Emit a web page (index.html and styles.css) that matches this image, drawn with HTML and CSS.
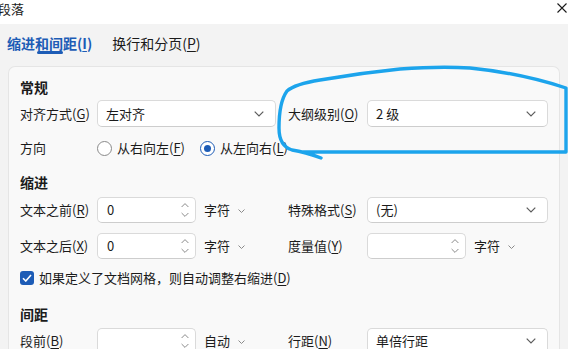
FILE: index.html
```html
<!DOCTYPE html>
<html lang="zh-CN">
<head>
<meta charset="utf-8">
<title>段落</title>
<link rel="stylesheet" href="styles.css">
</head>
<body>
<div class="window">
  <header class="titlebar">
    <span class="title">段落</span>
    <svg class="close" width="10" height="10" viewBox="0 0 10 10"><path d="M0.5 0.5 L9.5 9.5 M9.5 0.5 L0.5 9.5" stroke="#1a1a1a" stroke-width="1.1" fill="none"/></svg>
  </header>
  <nav class="tabs">
    <div class="tab active"><span class="tab-text">缩进和间距(<u>I</u>)</span><i class="tab-bar"></i></div>
    <div class="tab"><span class="tab-text">换行和分页(<u>P</u>)</span></div>
  </nav>
  <section class="card">
    <h3 class="heading">常规</h3>
    <div class="row first">
      <span class="label">对齐方式(<u>G</u>)</span>
      <div class="select left"><span>左对齐</span><svg class="chev" width="10" height="6" viewBox="0 0 10 6"><path d="M0.7 0.7 L5 5 L9.3 0.7" stroke="#5c5c5c" stroke-width="1.2" fill="none"/></svg></div>
      <span class="label">大纲级别(<u>O</u>)</span>
      <div class="select"><span>2 级</span><svg class="chev" width="10" height="6" viewBox="0 0 10 6"><path d="M0.7 0.7 L5 5 L9.3 0.7" stroke="#5c5c5c" stroke-width="1.2" fill="none"/></svg></div>
    </div>
    <div class="radio-row">
      <span class="label">方向</span>
      <span class="radio"></span><span class="radio-text">从右向左(<u>F</u>)</span>
      <span class="radio checked"></span><span class="radio-text">从左向右(<u>L</u>)</span>
    </div>

    <h3 class="heading h-indent">缩进</h3>
    <div class="row r-before">
      <span class="label">文本之前(<u>R</u>)</span>
      <div class="unit-wrap">
        <div class="spin"><span>0</span><svg class="arrows" width="8" height="14" viewBox="0 0 8 14"><path d="M0.6 4 L4 0.6 L7.4 4 M0.6 10 L4 13.4 L7.4 10" stroke="#8a8a8a" stroke-width="1" fill="none"/></svg></div>
        <span class="unit">字符</span><svg class="mini" width="7" height="4" viewBox="0 0 7 4"><path d="M0.5 0.5 L3.5 3.5 L6.5 0.5" stroke="#8a8a8a" stroke-width="1" fill="none"/></svg>
      </div>
      <span class="label">特殊格式(<u>S</u>)</span>
      <div class="select"><span>(无)</span><svg class="chev" width="10" height="6" viewBox="0 0 10 6"><path d="M0.7 0.7 L5 5 L9.3 0.7" stroke="#5c5c5c" stroke-width="1.2" fill="none"/></svg></div>
    </div>
    <div class="row r-after">
      <span class="label">文本之后(<u>X</u>)</span>
      <div class="unit-wrap">
        <div class="spin"><span>0</span><svg class="arrows" width="8" height="14" viewBox="0 0 8 14"><path d="M0.6 4 L4 0.6 L7.4 4 M0.6 10 L4 13.4 L7.4 10" stroke="#8a8a8a" stroke-width="1" fill="none"/></svg></div>
        <span class="unit">字符</span><svg class="mini" width="7" height="4" viewBox="0 0 7 4"><path d="M0.5 0.5 L3.5 3.5 L6.5 0.5" stroke="#8a8a8a" stroke-width="1" fill="none"/></svg>
      </div>
      <span class="label">度量值(<u>Y</u>)</span>
      <div class="unit-wrap">
        <div class="spin"><span></span><svg class="arrows" width="8" height="14" viewBox="0 0 8 14"><path d="M0.6 4 L4 0.6 L7.4 4 M0.6 10 L4 13.4 L7.4 10" stroke="#8a8a8a" stroke-width="1" fill="none"/></svg></div>
        <span class="unit">字符</span><svg class="mini" width="7" height="4" viewBox="0 0 7 4"><path d="M0.5 0.5 L3.5 3.5 L6.5 0.5" stroke="#8a8a8a" stroke-width="1" fill="none"/></svg>
      </div>
    </div>
    <div class="check-row">
      <span class="checkbox"><svg width="10" height="8" viewBox="0 0 10 8"><path d="M1 4.2 L3.8 7 L9 1" stroke="#fff" stroke-width="1.6" fill="none"/></svg></span>
      <span class="check-text">如果定义了文档网格，则自动调整右缩进(<u>D</u>)</span>
    </div>

    <h3 class="heading h-space">间距</h3>
    <div class="row r-space">
      <span class="label">段前(<u>B</u>)</span>
      <div class="unit-wrap">
        <div class="spin"><span></span><svg class="arrows" width="8" height="14" viewBox="0 0 8 14"><path d="M0.6 4 L4 0.6 L7.4 4 M0.6 10 L4 13.4 L7.4 10" stroke="#8a8a8a" stroke-width="1" fill="none"/></svg></div>
        <span class="unit">自动</span><svg class="mini" width="7" height="4" viewBox="0 0 7 4"><path d="M0.5 0.5 L3.5 3.5 L6.5 0.5" stroke="#8a8a8a" stroke-width="1" fill="none"/></svg>
      </div>
      <span class="label">行距(<u>N</u>)</span>
      <div class="select"><span>单倍行距</span><svg class="chev" width="10" height="6" viewBox="0 0 10 6"><path d="M0.7 0.7 L5 5 L9.3 0.7" stroke="#5c5c5c" stroke-width="1.2" fill="none"/></svg></div>
    </div>
  </section>

  <svg class="annotation" width="568" height="349" viewBox="0 0 568 349">
    <path d="M321 158 Q 305 152 292 150 Q 279 146 279 128 Q 279 102 287 91 Q 295 84 320 80 Q 360 73 400 69 Q 440 66 470 68 Q 520 73 566 88 L 566 152 L 302 152" stroke="#1ca4ec" stroke-width="3.4" fill="none" stroke-linecap="round" stroke-linejoin="round"/>
  </svg>
</div>
</body>
</html>
```

FILE: styles.css
```css
* { box-sizing: border-box; }

html, body {
  margin: 0;
  padding: 0;
}

body {
  width: 568px;
  height: 349px;
  overflow: hidden;
  background: #f3f3f3;
  font-family: "Noto Sans CJK SC", "Noto Sans", sans-serif;
  color: #1b1b1b;
  font-size: 13px;
}

.window {
  position: relative;
  width: 568px;
  height: 349px;
  overflow: hidden;
}

u { text-decoration: underline; text-underline-offset: 2px; text-decoration-thickness: 1px; }

.titlebar {
  height: 24px;
  background: #ffffff;
  display: flex;
  justify-content: space-between;
  align-items: flex-start;
}

.title {
  margin-left: -2px;
  padding-top: 1px;
  font-size: 13px;
  line-height: 16px;
}

.close {
  margin-top: 3px;
  margin-right: 1px;
}

.tabs {
  height: 42px;
  display: flex;
  gap: 20px;
  padding: 10px 0 0 7px;
  align-items: flex-start;
}

.tab {
  display: flex;
  flex-direction: column;
  align-items: center;
}

.tab-text {
  font-size: 14px;
  line-height: 18px;
  color: #1b1b1b;
}

.tab.active .tab-text {
  color: #1d5cb6;
  font-weight: 700;
}

.tab-bar {
  display: block;
  width: 26px;
  height: 3px;
  margin-top: -1px;
  border-radius: 2px;
  background: #1d5cb6;
}

.card {
  margin: 0 8px;
  height: 283px;
  overflow: hidden;
  background: #f9f9f9;
  border: 1px solid #e5e5e5;
  border-bottom: none;
  border-radius: 7px 7px 0 0;
  padding: 10px 11px 0 11px;
}

.heading {
  margin: 0;
  font-size: 14px;
  font-weight: 700;
  line-height: 20px;
}

.h-indent { margin-top: 14px; }
.h-space { margin-top: 16px; }

.row {
  display: grid;
  grid-template-columns: 77px 191px 79px 181px;
  align-items: center;
  height: 26px;
}

.row.first { margin-top: 3px; height: 27px; }
.r-before { margin-top: 5px; }
.r-after { margin-top: 10px; }
.r-space { margin-top: 4px; }

.label {
  line-height: 18px;
  white-space: nowrap;
}

.select {
  height: 100%;
  width: 181px;
  background: #ffffff;
  border: 1px solid #dadada;
  border-bottom-color: #cdcdcd;
  border-radius: 5px;
  display: flex;
  align-items: center;
  justify-content: space-between;
  padding: 0 11px 0 8px;
  line-height: 18px;
}

.select.left { width: 179px; }

.unit-wrap {
  display: flex;
  align-items: center;
  height: 100%;
}

.spin {
  width: 99px;
  height: 100%;
  background: #ffffff;
  border: 1px solid #dadada;
  border-bottom-color: #cdcdcd;
  border-radius: 5px;
  display: flex;
  align-items: center;
  justify-content: space-between;
  padding: 0 6px 0 9px;
  line-height: 18px;
}

.unit {
  margin-left: 8px;
  line-height: 18px;
}

.mini {
  margin-left: 8px;
  margin-top: 2px;
}

.radio-row {
  display: flex;
  align-items: center;
  height: 20px;
  margin-top: 11px;
}

.radio-row .label { width: 77px; }

.radio {
  width: 15px;
  height: 15px;
  border-radius: 50%;
  border: 1px solid #8a8a8a;
  background: #ffffff;
  display: flex;
  align-items: center;
  justify-content: center;
}

.radio.checked {
  border-color: #1d5cb6;
  margin-left: 15px;
}

.radio.checked::after {
  content: "";
  width: 7px;
  height: 7px;
  border-radius: 50%;
  background: #1d5cb6;
}

.radio-text {
  margin-left: 5px;
  line-height: 18px;
  white-space: nowrap;
}

.check-row {
  display: flex;
  align-items: center;
  height: 20px;
  margin-top: 9px;
}

.checkbox {
  width: 14px;
  height: 14px;
  border-radius: 3px;
  background: #1d5cb6;
  display: flex;
  align-items: center;
  justify-content: center;
}

.check-text {
  margin-left: 5px;
  line-height: 18px;
  white-space: nowrap;
}

.annotation {
  position: absolute;
  left: 0;
  top: 0;
  pointer-events: none;
}
```
